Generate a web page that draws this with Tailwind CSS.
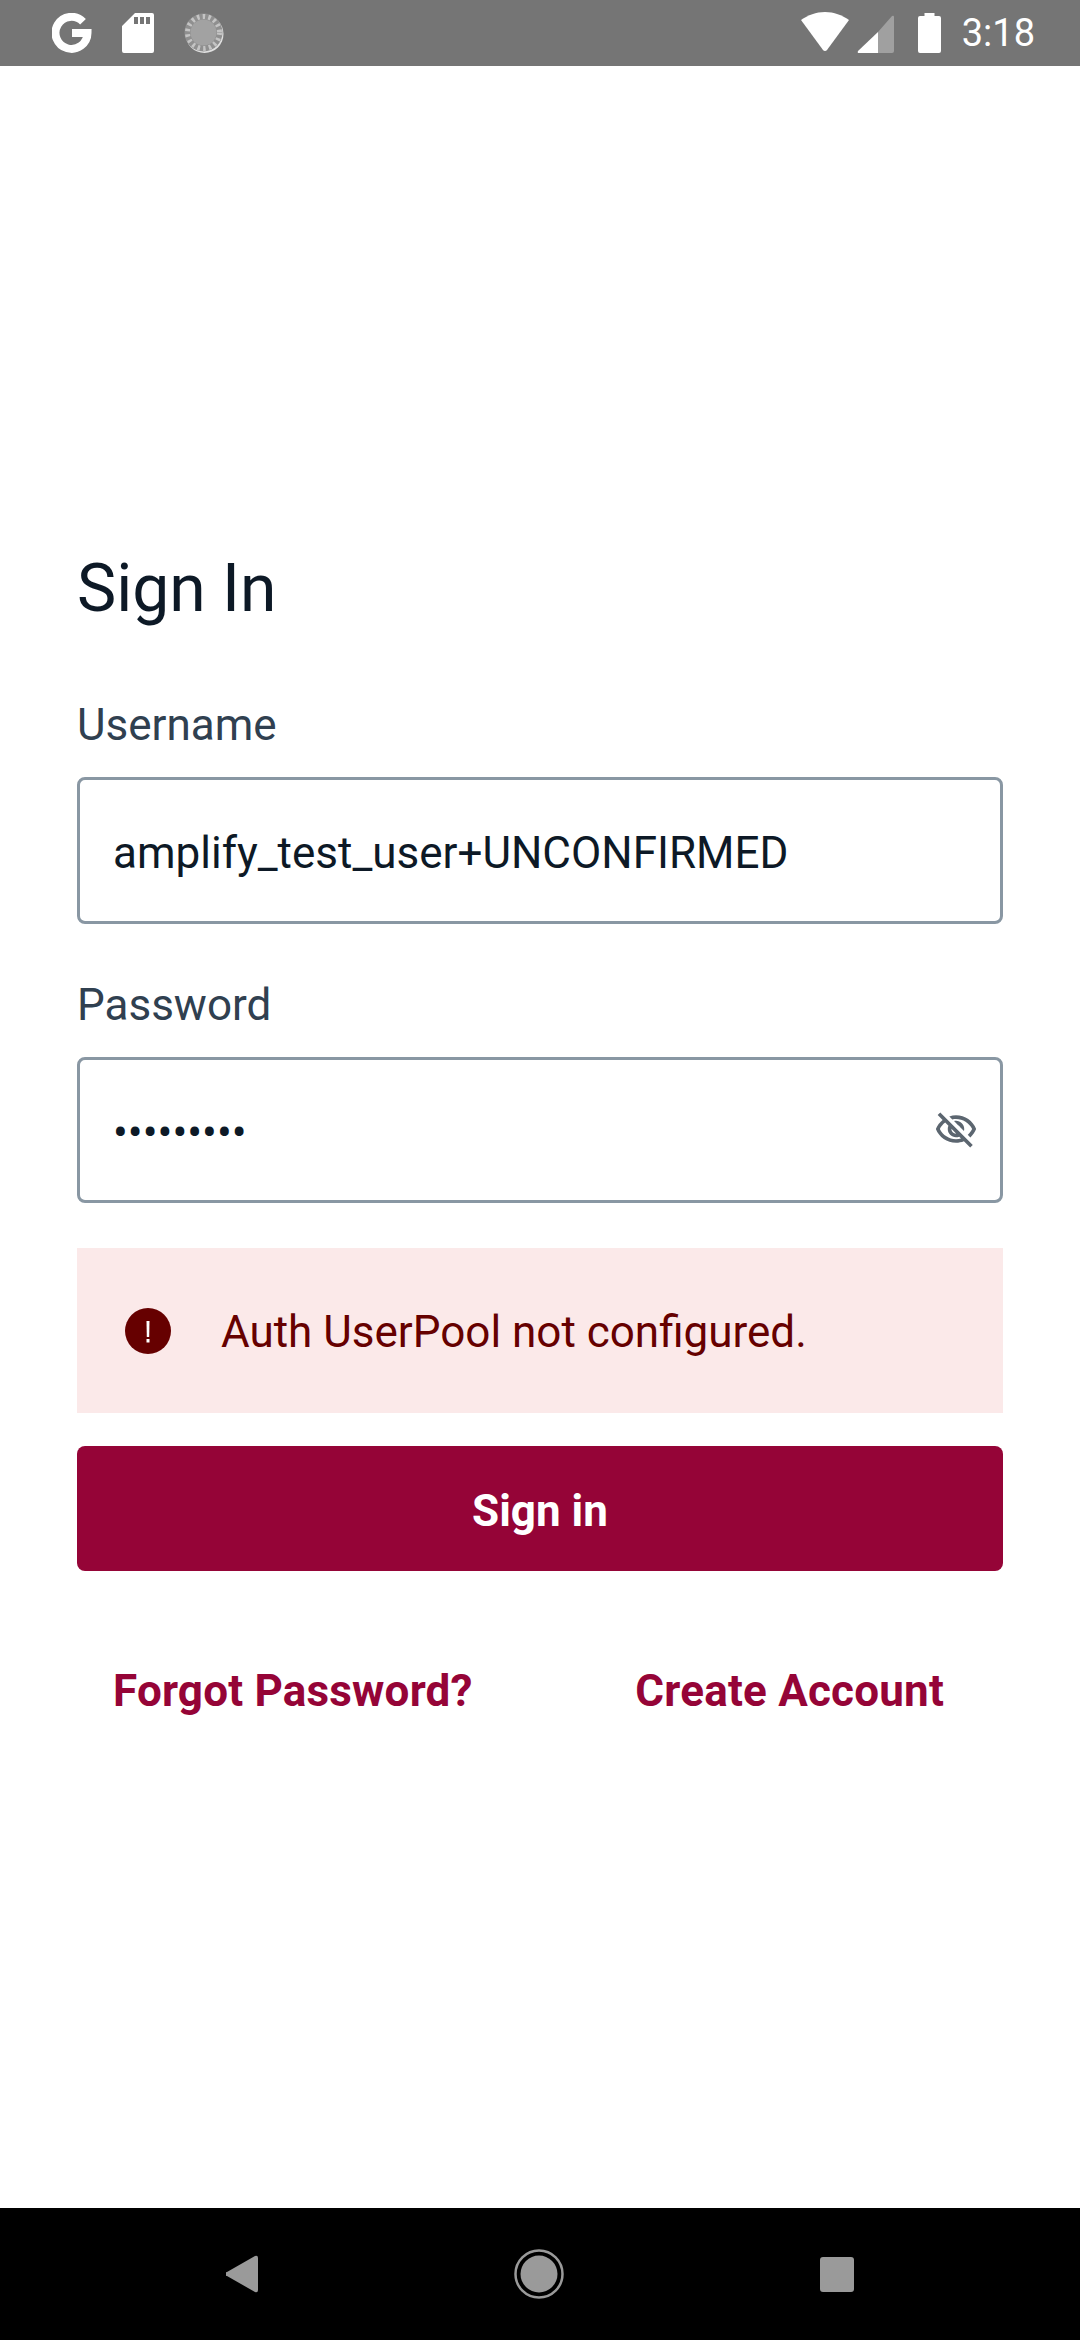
<!DOCTYPE html>
<html lang="en">
<head>
  <meta charset="UTF-8"/>
  <meta name="viewport" content="width=device-width, initial-scale=1"/>
  <title>Sign In</title>
  <script src="https://cdn.jsdelivr.net/npm/@tailwindcss/browser@4"></script>
</head>
<body class="bg-white font-['Roboto',sans-serif]">
<div class="flex flex-col w-[1080px] h-[2340px] overflow-hidden">

  <!-- status bar -->
  <header class="h-[66px] bg-[#757575] flex items-center pl-[52px] pr-[45px] shrink-0">
    <svg class="w-[40px] h-[40px]" viewBox="0 0 40 40"><path fill="none" stroke="#fff" stroke-width="8" d="M31 8.7A16 16 0 1 0 35.500 20H20"/></svg>
    <svg class="w-[32px] h-[40px] ml-[30px]" viewBox="0 0 32 40"><path fill="#fff" fill-rule="evenodd" d="M13 0h17a2 2 0 0 1 2 2v36a2 2 0 0 1-2 2H2a2 2 0 0 1-2-2V13zM12 4v7h4V4zM18 4v7h4V4zM24 4v7h4V4z"/></svg>
    <svg class="w-[40px] h-[40px] ml-[30px]" viewBox="0 0 40 40"><circle cx="20.500" cy="21" r="19" fill="#e0e0e0"/><circle cx="19.500" cy="19.500" r="19" fill="#8f8f8f"/><circle cx="19.500" cy="19.500" r="16" fill="none" stroke="#c4c4c4" stroke-width="5" stroke-dasharray="2.500 3.200"/><circle cx="19.500" cy="19.500" r="13" fill="#a2a2a2"/></svg>
    <div class="ml-auto flex items-center">
      <svg class="w-[48px] h-[40px] mt-[-2px]" viewBox="0 0 48 40"><path fill="#fff" d="M24 0C15 0 7 3 0 8l22 30a2.500 2.500 0 0 0 4 0L48 8C41 3 33 0 24 0z"/></svg>
      <svg class="w-[37px] h-[38px] ml-[8px] mt-[1px]" viewBox="0 0 37 38"><path fill="#a0a0a0" d="M21 17 35 1q2-1 2 1v34q0 2-2 2H21z"/><path fill="#fff" d="M21 17v21H2q-2 0-1-2z"/></svg>
      <svg class="w-[23px] h-[40px] ml-[24px]" viewBox="0 0 23 40"><path fill="#fff" d="M6.500 0h10v3h4.500a2 2 0 0 1 2 2v33a2 2 0 0 1-2 2H2a2 2 0 0 1-2-2V5a2 2 0 0 1 2-2h4.500z"/></svg>
      <span class="ml-[21px] text-white text-[38px] leading-[40px]">3:18</span>
    </div>
  </header>

  <!-- sign in form -->
  <main class="flex-1 px-[77px] pt-[490px] text-[#0d1926]">
    <h1 class="text-[66px] leading-[66px] font-normal">Sign In</h1>

    <label class="block mt-[75px] text-[#304050] text-[44px] leading-[56px]">Username</label>
    <div class="mt-[24px] h-[147px] border-[3px] border-[#8997a3] rounded-[8px] flex items-center px-[33px] pt-[5px] text-[44px]">amplify_test_user+UNCONFIRMED</div>

    <label class="block mt-[53px] text-[#304050] text-[44px] leading-[56px]">Password</label>
    <div class="mt-[24px] h-[146px] border-[3px] border-[#8997a3] rounded-[8px] flex items-center pl-[33px] pr-[22px]">
      <span class="text-[44px] mt-[5px]">•••••••••</span>
      <svg class="ml-auto w-[44px] h-[44px]" viewBox="0 0 24 24" fill="#5c6670"><path d="M12 6c3.790 0 7.170 2.130 8.820 5.500-.59 1.220-1.420 2.270-2.410 3.120l1.410 1.410c1.390-1.230 2.490-2.770 3.180-4.530C21.270 7.110 17 4 12 4c-1.270 0-2.490.2-3.640.57l1.650 1.650C10.660 6.090 11.320 6 12 6zm-1.070 1.140L13 9.210c.57.25 1.030.71 1.280 1.280l2.070 2.070c.08-.34.14-.7.14-1.070C16.500 9.010 14.480 7 12 7c-.37 0-.72.05-1.070.14zM2.010 3.870l2.680 2.680C3.060 7.830 1.770 9.530 1 11.500 2.730 15.890 7 19 12 19c1.520 0 2.980-.29 4.320-.82l3.420 3.420 1.410-1.410L3.420 2.450 2.010 3.870zm7.500 7.500l2.610 2.610c-.04.01-.08.02-.12.02-1.380 0-2.500-1.120-2.500-2.500 0-.05.01-.08.01-.13zm-3.400-3.400l1.750 1.750c-.23.55-.36 1.150-.36 1.780 0 2.480 2.020 4.500 4.500 4.500.63 0 1.230-.13 1.770-.36l.98.98c-.88.24-1.800.38-2.750.38-3.790 0-7.170-2.130-8.820-5.500.7-1.430 1.720-2.610 2.930-3.530z"/></svg>
    </div>

    <div class="mt-[45px] h-[165px] bg-[#fbe9e9] flex items-center pl-[48px]">
      <svg class="w-[46px] h-[46px] shrink-0" viewBox="0 0 46 46"><circle cx="23" cy="23" r="23" fill="#660000"/><path fill="#fff" d="M21.500 13h3l-.3 16h-2.400z"/><rect x="21.500" y="31" width="3" height="3.500" fill="#fff"/></svg>
      <span class="ml-[50px] pt-[2px] text-[#660000] text-[44px]">Auth UserPool not configured.</span>
    </div>

    <button class="block w-full mt-[33px] h-[125px] pt-[4px] rounded-[8px] bg-[#950437] text-white text-[44px] font-bold">Sign in</button>

    <div class="mt-[92px] flex justify-between pl-[36px] pr-[59px] text-[#950437] text-[44px] leading-[56px] font-bold tracking-[0.2px]">
      <a>Forgot Password?</a>
      <a>Create Account</a>
    </div>
  </main>

  <!-- nav bar -->
  <footer class="h-[132px] bg-black flex items-center justify-between px-[226px] shrink-0">
    <svg class="w-[32px] h-[38px]" viewBox="0 0 32 38"><path fill="#9a9a9a" d="M1 21a2 2 0 0 1 0-4L29 1q3-1 3 2v32q0 3-3 2z"/></svg>
    <svg class="w-[50px] h-[50px]" viewBox="0 0 50 50"><circle cx="25" cy="25" r="23.500" fill="none" stroke="#9a9a9a" stroke-width="2.500"/><circle cx="25" cy="25" r="18.500" fill="#9a9a9a"/></svg>
    <div class="w-[34px] h-[35px] rounded-[3px] bg-[#9a9a9a]"></div>
  </footer>
</div>
</body>
</html>
